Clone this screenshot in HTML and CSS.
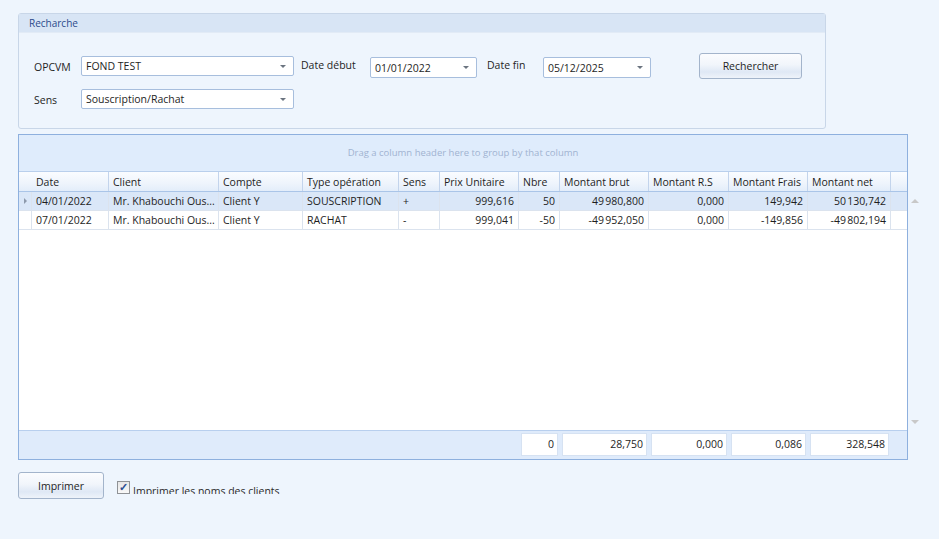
FILE: index.html
```html
<!DOCTYPE html>
<html lang="fr">
<head>
    <meta charset="UTF-8">
    <title>Opérations OPCVM</title>
    <link rel="stylesheet" href="styles.css">
</head>
<body>
    <div class="page">
        <section class="group-box">
            <div class="group-title">Recharche</div>
            <div class="group-body">
                <div class="form-row">
                    <label class="lbl lbl-opcvm">OPCVM</label>
                    <div class="combo combo-wide">FOND TEST<span class="arrow"></span></div>
                    <label class="lbl lbl-debut">Date début</label>
                    <div class="combo combo-date">01/01/2022<span class="arrow"></span></div>
                    <label class="lbl lbl-fin">Date fin</label>
                    <div class="combo combo-date combo-fin">05/12/2025<span class="arrow"></span></div>
                    <button class="btn btn-search">Rechercher</button>
                </div>
                <div class="form-row row-sens">
                    <label class="lbl lbl-opcvm">Sens</label>
                    <div class="combo combo-wide">Souscription/Rachat<span class="arrow"></span></div>
                </div>
            </div>
        </section>

        <section class="grid">
            <div class="group-panel">Drag a column header here to group by that column</div>
            <div class="grid-row grid-head">
                <div></div>
                <div>Date</div>
                <div>Client</div>
                <div>Compte</div>
                <div>Type opération</div>
                <div>Sens</div>
                <div>Prix Unitaire</div>
                <div>Nbre</div>
                <div>Montant brut</div>
                <div>Montant R.S</div>
                <div>Montant Frais</div>
                <div>Montant net</div>
                <div class="head-end"></div>
            </div>
            <div class="grid-body">
                <div class="rows">
                    <div class="grid-row data-row selected">
                        <div class="indicator"><span class="tri"></span></div>
                        <div>04/01/2022</div>
                        <div>Mr. Khabouchi Ous...</div>
                        <div>Client Y</div>
                        <div>SOUSCRIPTION</div>
                        <div>+</div>
                        <div class="num">999,616</div>
                        <div class="num">50</div>
                        <div class="num">49&#8239;980,800</div>
                        <div class="num">0,000</div>
                        <div class="num">149,942</div>
                        <div class="num">50&#8239;130,742</div>
                    </div>
                    <div class="grid-row data-row">
                        <div class="indicator"></div>
                        <div>07/01/2022</div>
                        <div>Mr. Khabouchi Ous...</div>
                        <div>Client Y</div>
                        <div>RACHAT</div>
                        <div>-</div>
                        <div class="num">999,041</div>
                        <div class="num">-50</div>
                        <div class="num">-49&#8239;952,050</div>
                        <div class="num">0,000</div>
                        <div class="num">-149,856</div>
                        <div class="num">-49&#8239;802,194</div>
                    </div>
                </div>
                <div class="scrollbar">
                    <span class="sb-up"></span>
                    <span class="sb-down"></span>
                </div>
            </div>
            <div class="grid-row grid-foot">
                <div class="foot-skip"></div>
                <div class="sum">0</div>
                <div class="sum">28,750</div>
                <div class="sum">0,000</div>
                <div class="sum">0,086</div>
                <div class="sum">328,548</div>
                <div></div>
            </div>
        </section>

        <div class="actions">
            <button class="btn btn-print">Imprimer</button>
            <label class="check">
                <span class="box">&#10003;</span>
                <span class="check-text">Imprimer les noms des clients</span>
            </label>
        </div>
    </div>
</body>
</html>
```

FILE: styles.css
```css
/* --- Theme --- */
:root {
    --bg-color: #eef5fd;
    --text-color: #1e1e1e;
    --title-color: #2c4a8c;
    --panel-border: #c8d6e8;
    --grid-border: #8eb0de;
    --cell-line: #dbe3ee;
    --head-line: #c3d4ec;
    --cols: 13px 77px 110px 84px 96px 41px 79px 41px 89px 80px 79px 83px 16px;
    --font-main: 'Open Sans', 'Noto Sans', sans-serif;
}
body {
    margin: 0;
    background-color: var(--bg-color);
    color: var(--text-color);
    font-family: var(--font-main);
    font-size: 10.5px;
}
.page {
    padding: 13px 0 0 18px;
}

/* --- Search box --- */
.group-box {
    width: 806px;
    height: 114px;
    border: 1px solid var(--panel-border);
    border-radius: 3px;
    background-color: #eef5fd;
}
.group-title {
    height: 18px;
    line-height: 18px;
    padding-left: 10px;
    background-color: #d8e5f5;
    border-bottom: 1px solid #e2ebf6;
    color: var(--title-color);
    font-size: 10px;
}
.group-body {
    padding: 20px 0 0 15px;
}
.form-row {
    display: flex;
    align-items: center;
    height: 26px;
}
.row-sens {
    margin-top: 10px;
    height: 20px;
}
.lbl { display: block; }
.lbl-opcvm { width: 47px; margin-top: 1px; }
.lbl-debut { width: 69px; margin-left: 7px; margin-top: -2px; }
.lbl-fin { width: 56px; margin-left: 10px; margin-top: -2px; }

.combo {
    position: relative;
    box-sizing: border-box;
    height: 20px;
    line-height: 18px;
    padding-left: 4px;
    background-color: #fff;
    border: 1px solid #a7bedd;
    border-radius: 2px;
}
.combo-wide { width: 213px; }
.combo-date { width: 107px; height: 21px; line-height: 21px; margin-top: 2px; }
.combo-fin { width: 108px; }
.combo .arrow {
    position: absolute;
    right: 7px;
    top: 8px;
    border-left: 3px solid transparent;
    border-right: 3px solid transparent;
    border-top: 3px solid #6b7480;
}

.btn {
    box-sizing: border-box;
    font-family: var(--font-main);
    font-size: 10.5px;
    color: var(--text-color);
    border: 1px solid #a3b4cb;
    border-radius: 3px;
    background: linear-gradient(to bottom, #fbfcfe 0%, #f1f5fb 45%, #dfe8f5 75%, #eef3fa 100%);
    padding: 0;
}
.btn-search {
    width: 103px;
    height: 26px;
    margin-left: 48px;
    margin-top: -1px;
}

/* --- Data grid --- */
.grid {
    width: 888px;
    margin-top: 5px;
    border: 1px solid var(--grid-border);
    background-color: #fff;
}
.group-panel {
    height: 36px;
    line-height: 36px;
    text-align: center;
    background-color: #dfecfc;
    border-bottom: 1px solid #b9cfec;
    color: #9fb3d1;
    font-size: 9.5px;
}
.grid-row {
    display: grid;
    grid-template-columns: var(--cols);
}
.grid-head {
    height: 19px;
    background: linear-gradient(to bottom, #fafcff 0%, #eef4fc 60%, #e3edfa 100%);
    border-bottom: 1px solid #aac5e8;
}
.grid-head > div {
    line-height: 20px;
    padding-left: 4px;
    border-right: 1px solid var(--head-line);
    white-space: nowrap;
    overflow: hidden;
}
.grid-head > div:first-child { padding-left: 0; border-right: none; }
.grid-head > .head-end { border-right: none; }

.grid-body {
    display: flex;
    height: 238px;
}
.rows { flex: 1; }
.data-row { height: 18px; border-bottom: 1px solid var(--cell-line); }
.data-row > div {
    line-height: 18px;
    padding: 0 4px;
    border-right: 1px solid var(--cell-line);
    white-space: nowrap;
    overflow: hidden;
}
.data-row > .indicator { padding: 0; position: relative; }
.data-row > .num { text-align: right; }
.data-row.selected { background-color: #dae7f8; }
.tri {
    position: absolute;
    left: 5px;
    top: 6px;
    border-top: 3px solid transparent;
    border-bottom: 3px solid transparent;
    border-left: 3px solid #8d9aac;
}

.scrollbar {
    position: relative;
    width: 16px;
    background-color: #f3f3f3;
}
.sb-up, .sb-down {
    position: absolute;
    left: 4px;
    border-left: 4px solid transparent;
    border-right: 4px solid transparent;
}
.sb-up { top: 7px; border-bottom: 4px solid #c8c8c8; }
.sb-down { bottom: 6px; border-top: 4px solid #c8c8c8; }

.grid-foot {
    grid-template-columns: 500px 41px 89px 80px 79px 83px 16px;
    height: 28px;
    background-color: #dfebfb;
    border-top: 1px solid #b8cfee;
}
.grid-foot > .sum {
    margin: 2px 2px 3px 2px;
    background-color: #fff;
    border: 1px solid #d6e2f2;
    line-height: 21px;
    text-align: right;
    padding-right: 3px;
}

/* --- Bottom actions --- */
.actions {
    display: flex;
    align-items: flex-start;
    margin-top: 12px;
}
.btn-print {
    width: 86px;
    height: 27px;
}
.check {
    display: flex;
    align-items: flex-start;
    margin-left: 13px;
    margin-top: 9px;
}
.box {
    box-sizing: border-box;
    width: 13px;
    height: 13px;
    border: 1px solid #8f9296;
    background: linear-gradient(to bottom, #e6e6e6, #f8f8f8);
    color: #2c4e93;
    font-size: 11px;
    line-height: 10px;
    text-align: center;
    font-weight: bold;
}
.check-text {
    display: block;
    height: 10px;
    overflow: hidden;
    margin-left: 3px;
    margin-top: 3px;
    line-height: 15px;
    color: #2a2a2a;
}
```
